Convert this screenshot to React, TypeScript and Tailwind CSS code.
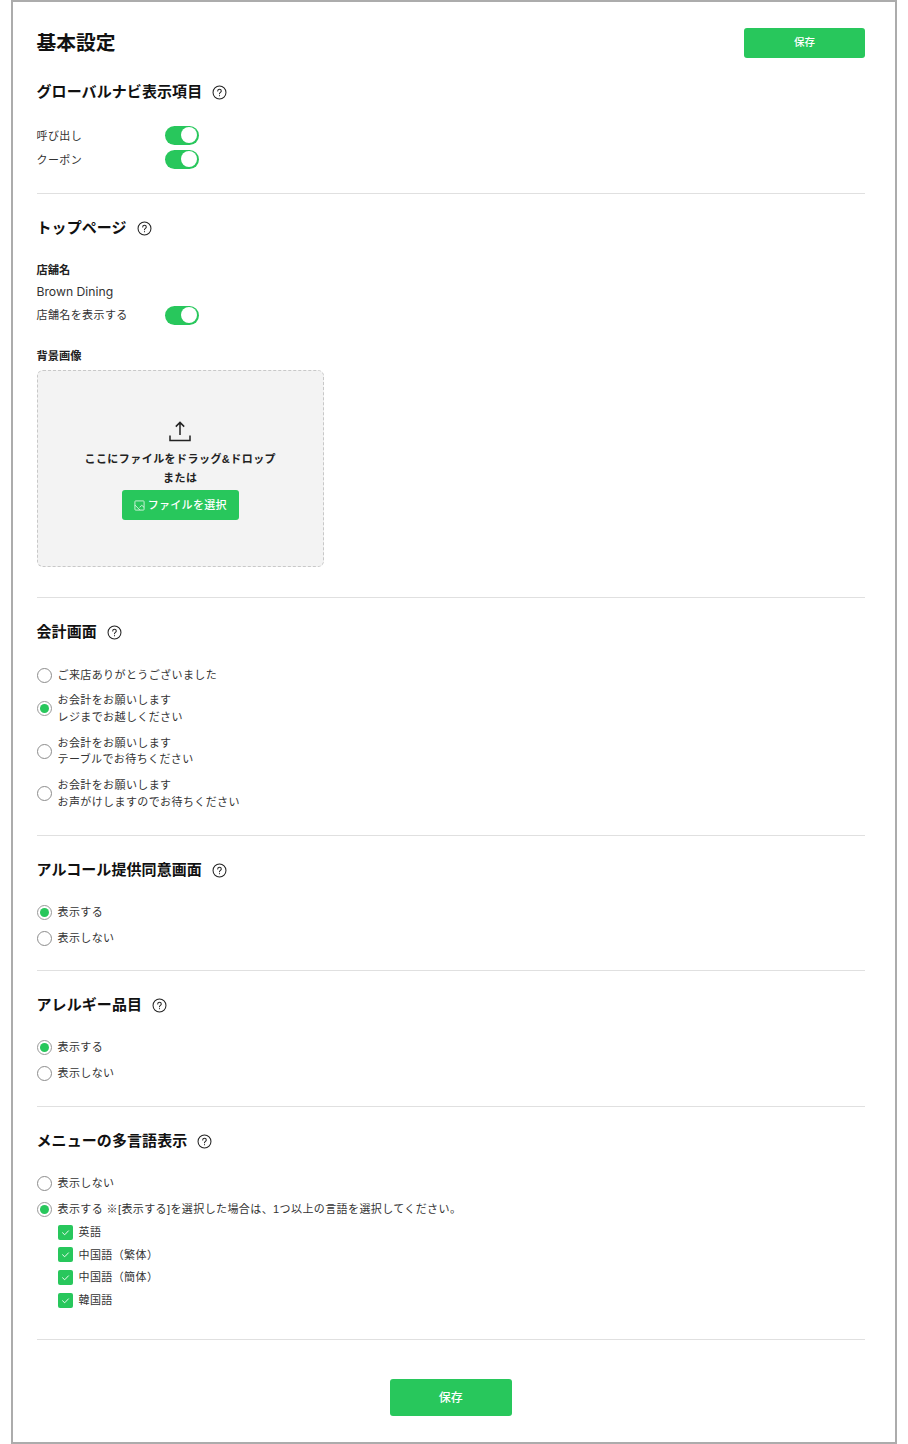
import type { ReactNode } from "react";

const FONT = "font-['Liberation_Sans','Noto_Sans_CJK_JP',sans-serif]";

function HelpIcon() {
  return (
    <svg viewBox="0 0 16 16" fill="none" stroke="#222" strokeWidth={1.1} strokeLinecap="round" className="h-[15px] w-[15px]">
      <circle cx="8" cy="8" r="6.9" />
      <path d="M6.1 6.4c0-1.1.8-1.8 1.9-1.8s1.9.7 1.9 1.7c0 1.5-1.9 1.5-1.9 3" />
      <path d="M8 11.3v.2" />
    </svg>
  );
}

function Heading({ children }: { children: ReactNode }) {
  return (
    <div className="flex h-[22px] items-center gap-[10px]">
      <h2 className="text-[15px] leading-[22px] font-semibold tracking-[0.08px] text-[#111]">{children}</h2>
      <HelpIcon />
    </div>
  );
}

function Toggle() {
  return (
    <span className="flex h-[19px] w-[34px] items-center justify-end rounded-full bg-[#28c75c] pr-[1.5px]">
      <span className="h-[16px] w-[16px] rounded-full bg-white" />
    </span>
  );
}

function ToggleRow({ label, labelClassName = "pt-px" }: { label: string; labelClassName?: string }) {
  return (
    <div className="flex h-[24px] items-center">
      <span className={`w-[128px] text-[11px] tracking-[0.4px] text-[#333] ${labelClassName}`}>{label}</span>
      <Toggle />
    </div>
  );
}

function Radio({ lines, checked = false, className = "h-[26px]" }: { lines: string[]; checked?: boolean; className?: string }) {
  return (
    <div className={`flex items-center gap-[6px] ${className}`}>
      <span
        className={`flex h-[15px] w-[15px] shrink-0 items-center justify-center rounded-full border bg-white ${
          checked ? "border-[#999]" : "border-[#8c8c8c]"
        }`}
      >
        {checked && <span className="h-[9px] w-[9px] rounded-full bg-[#28c75c]" />}
      </span>
      <div className="text-[11px] leading-[16.5px] tracking-[0.4px] text-[#333]">
        {lines.map((line) => (
          <div key={line}>{line}</div>
        ))}
      </div>
    </div>
  );
}

function Check({ label }: { label: string }) {
  return (
    <div className="flex h-[22.6px] items-center gap-[6px]">
      <span className="flex h-[15px] w-[15px] items-center justify-center rounded-[2px] bg-[#28c75c]">
        <svg viewBox="0 0 12 12" fill="none" stroke="#fff" strokeWidth={1} className="h-[11px] w-[11px]">
          <path d="M2.5 6l2.6 2.5 4.4-4.6" />
        </svg>
      </span>
      <span className="text-[11px] tracking-[0.4px] text-[#333]">{label}</span>
    </div>
  );
}

function Section({ children, className = "" }: { children: ReactNode; className?: string }) {
  return <section className={`border-b border-[#e0e0e0] ${className}`}>{children}</section>;
}

export default function App() {
  return (
    <div className={`h-[1444px] w-[908px] bg-white ${FONT}`}>
      <div className="ml-[11px] h-[1444px] w-[886px] border-2 border-[#acacac] bg-white pt-[26px] pr-[30px] pl-[23.5px]">
        <div className="flex h-[30px] items-center justify-between">
          <h1 className="pt-[2px] text-[19.75px] font-semibold text-[#111]">基本設定</h1>
          <button className="h-[30px] w-[121px] rounded-[3px] bg-[#28c75c] text-[10.5px] font-medium text-white">保存</button>
        </div>

        <Section className="mt-[23px] pb-[22px]">
          <Heading>グローバルナビ表示項目</Heading>
          <div className="mt-[20px]">
            <ToggleRow label="呼び出し" labelClassName="pt-[2px]" />
            <ToggleRow label="クーポン" labelClassName="pt-[2px]" />
          </div>
        </Section>

        <Section className="pt-[23px] pb-[30px]">
          <Heading>トップページ</Heading>
          <div className="mt-[23px] text-[11.25px] leading-[16px] font-semibold text-[#222]">店舗名</div>
          <div className="mt-[6px] font-['Inter'] text-[12.2px] leading-[16px] text-[#333]">Brown Dining</div>
          <div className="mt-[3px]">
            <ToggleRow label="店舗名を表示する" />
          </div>
          <div className="mt-[21px] text-[11.25px] leading-[16px] font-semibold text-[#222]">背景画像</div>
          <div className="mt-[6px] flex h-[197px] w-[287.5px] flex-col items-center rounded-[6px] border border-dashed border-[#c8c8c8] bg-[#f3f3f3] pt-[49px]">
            <svg viewBox="0 0 22 22" fill="none" stroke="#222" strokeWidth={1.5} className="h-[22px] w-[22px]">
              <path d="M11 15V2.5M6.8 6.6 11 2.4l4.2 4.2M1 15.5v5h20v-5" />
            </svg>
            <div className="mt-[8px] text-center text-[11px] leading-[19px] font-semibold tracking-[0.45px] text-[#222]">
              <div>ここにファイルをドラッグ&ドロップ</div>
              <div>または</div>
            </div>
            <button className="mt-[2px] flex h-[30px] w-[117px] items-center justify-center gap-[3px] rounded-[3px] bg-[#28c75c] text-[11px] font-medium tracking-[0.3px] text-white">
              <svg viewBox="0 0 12 12" fill="none" stroke="#fff" strokeWidth={0.8} className="h-[11px] w-[11px]">
                <rect x="1" y="1" width="10" height="10" rx="0.8" />
                <path d="M1 5.5 6.5 11M6 8 8.5 5.8 11 8" />
              </svg>
              ファイルを選択
            </button>
          </div>
        </Section>

        <Section className="pt-[23px] pb-[25px]">
          <Heading>会計画面</Heading>
          <div className="mt-[19px]">
            <Radio lines={["ご来店ありがとうございました"]} />
            <div className="mt-[4px]">
              <Radio checked lines={["お会計をお願いします", "レジまでお越しください"]} className="h-[33px]" />
            </div>
            <div className="mt-[9.5px]">
              <Radio lines={["お会計をお願いします", "テーブルでお待ちください"]} className="h-[33px]" />
            </div>
            <div className="mt-[9.5px]">
              <Radio lines={["お会計をお願いします", "お声がけしますのでお待ちください"]} className="h-[33px]" />
            </div>
          </div>
        </Section>

        <Section className="pt-[23px] pb-[19px]">
          <Heading>アルコール提供同意画面</Heading>
          <div className="mt-[18px]">
            <Radio checked lines={["表示する"]} />
            <Radio lines={["表示しない"]} />
          </div>
        </Section>

        <Section className="pt-[23px] pb-[20px]">
          <Heading>アレルギー品目</Heading>
          <div className="mt-[18px]">
            <Radio checked lines={["表示する"]} />
            <Radio lines={["表示しない"]} />
          </div>
        </Section>

        <Section className="pt-[23px] pb-[28px]">
          <Heading>メニューの多言語表示</Heading>
          <div className="mt-[18px]">
            <Radio lines={["表示しない"]} />
            <Radio checked lines={["表示する ※[表示する]を選択した場合は、1つ以上の言語を選択してください。"]} />
            <div className="-mt-[1px] pl-[21px]">
              <Check label="英語" />
              <Check label="中国語（繁体）" />
              <Check label="中国語（簡体）" />
              <Check label="韓国語" />
            </div>
          </div>
        </Section>

        <div className="mt-[39px] flex justify-center">
          <button className="h-[37px] w-[122px] rounded-[3px] bg-[#28c75c] text-[12px] font-medium text-white">保存</button>
        </div>
      </div>
    </div>
  );
}
